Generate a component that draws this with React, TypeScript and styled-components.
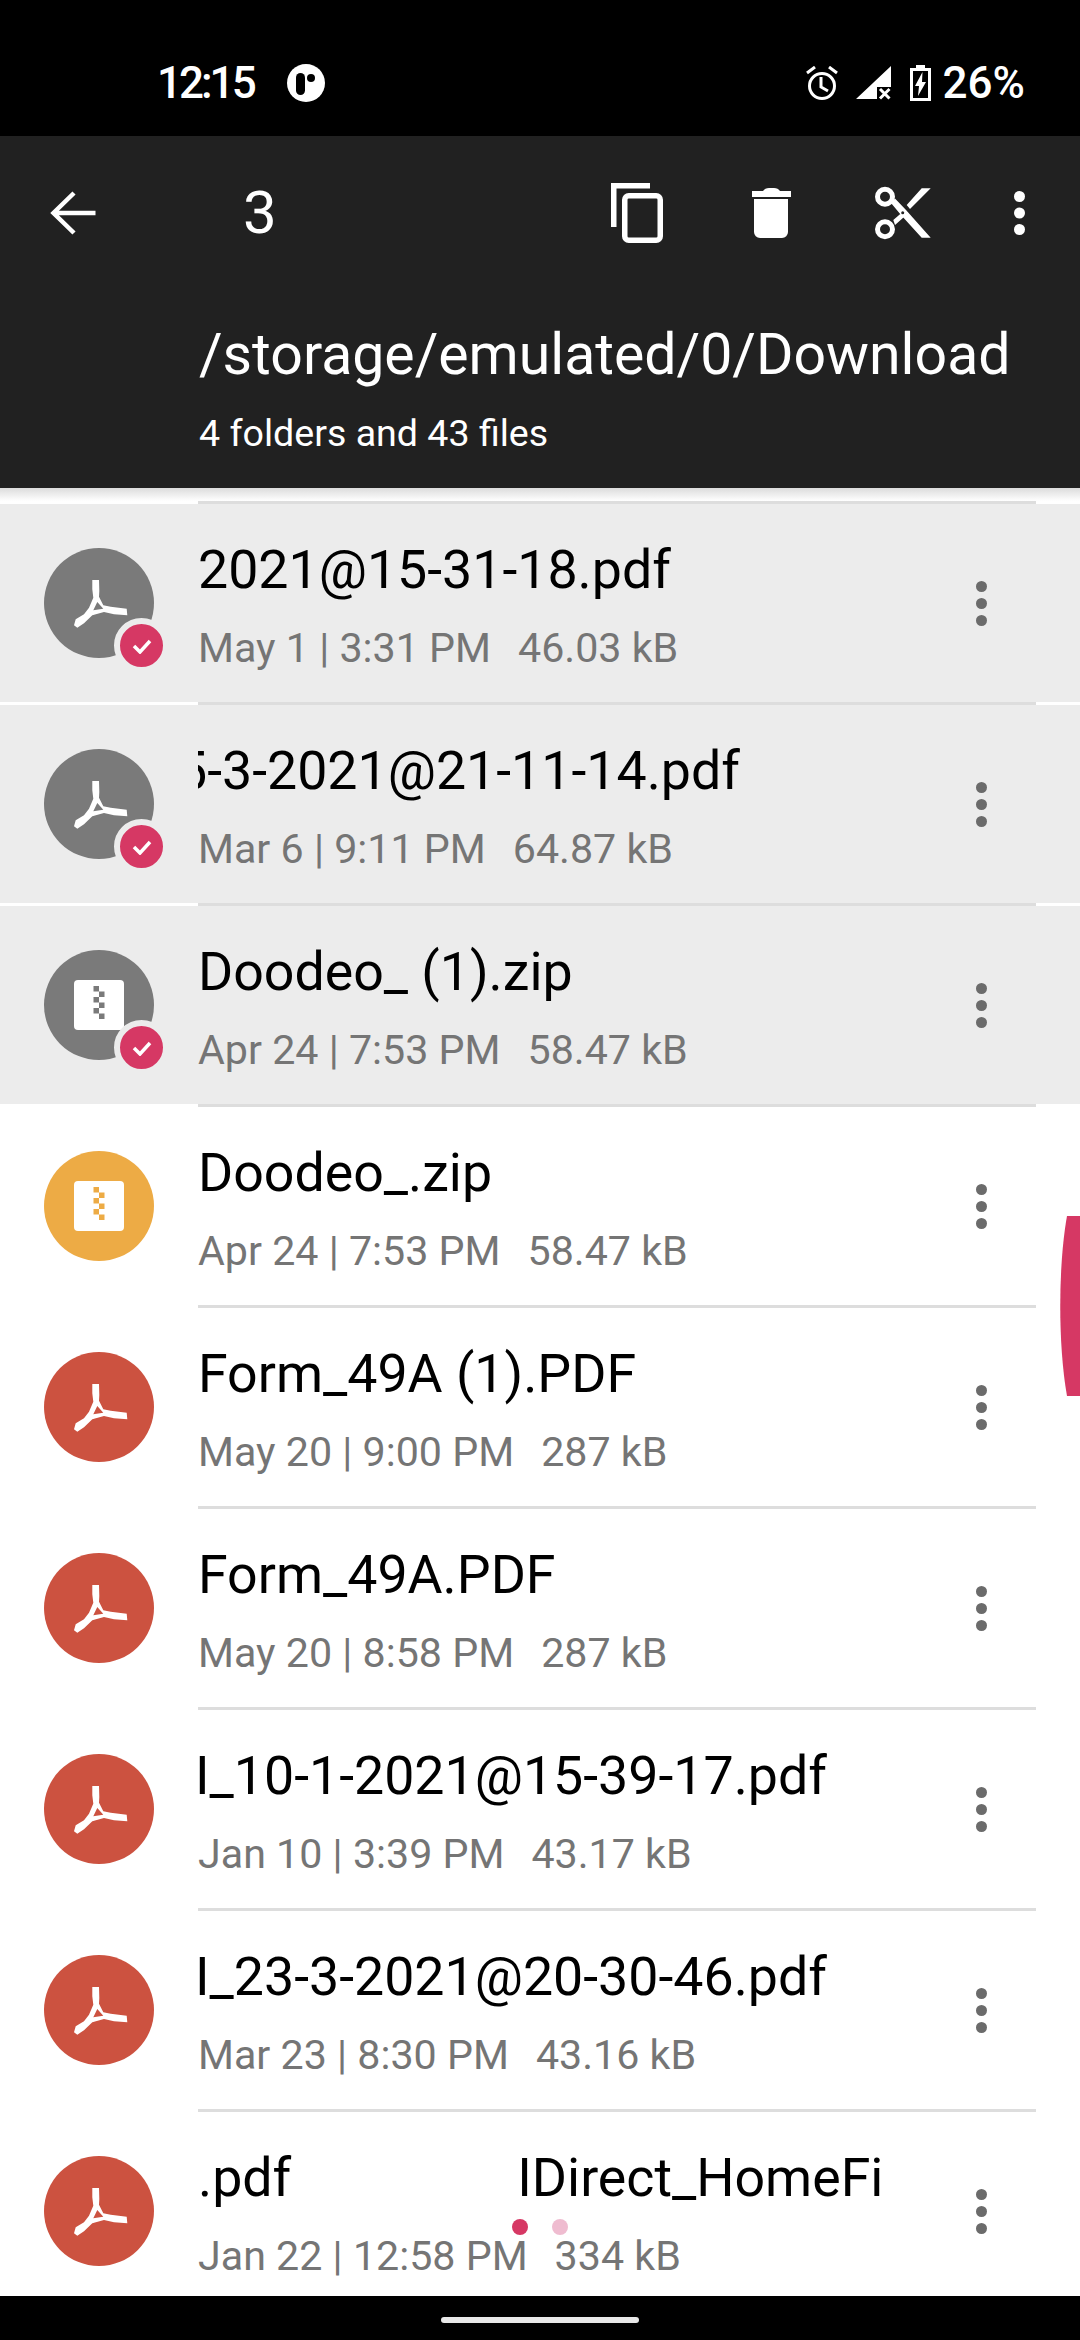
import React from "react";
import styled, { createGlobalStyle } from "styled-components";

type FileItem = {
  name: string;
  date: string;
  size: string;
  kind: "pdf" | "zip";
  selected?: boolean;
  shift?: number;
  trail?: string;
};

const files: FileItem[] = [
  { name: "2021@15-31-18.pdf", date: "May 1 | 3:31 PM", size: "46.03 kB", kind: "pdf", selected: true },
  { name: "5-3-2021@21-11-14.pdf", date: "Mar 6 | 9:11 PM", size: "64.87 kB", kind: "pdf", selected: true, shift: -21 },
  { name: "Doodeo_ (1).zip", date: "Apr 24 | 7:53 PM", size: "58.47 kB", kind: "zip", selected: true },
  { name: "Doodeo_.zip", date: "Apr 24 | 7:53 PM", size: "58.47 kB", kind: "zip" },
  { name: "Form_49A (1).PDF", date: "May 20 | 9:00 PM", size: "287 kB", kind: "pdf" },
  { name: "Form_49A.PDF", date: "May 20 | 8:58 PM", size: "287 kB", kind: "pdf" },
  { name: "I_10-1-2021@15-39-17.pdf", date: "Jan 10 | 3:39 PM", size: "43.17 kB", kind: "pdf", shift: -3 },
  { name: "I_23-3-2021@20-30-46.pdf", date: "Mar 23 | 8:30 PM", size: "43.16 kB", kind: "pdf", shift: -3 },
  { name: ".pdf", date: "Jan 22 | 12:58 PM", size: "334 kB", kind: "pdf", trail: "IDirect_HomeFi" },
];

const PdfGlyph = () => (
  <svg width="110" height="110" viewBox="0 0 110 110">
    <path
      fillRule="evenodd"
      fill="#fff"
      d="M48.3 32L55 32L55.3 43L55 48.7L59.3 57.3L66.7 58.7L82.7 60.7L83.3 67.3L70 66.3L60 64L48.3 67.3L40 75.3L33.3 79.7L30 77.3L31.7 71.3L40 66.3L45 59.7L49.3 49.7L48.3 41.3ZM53.3 54L49.3 62.3L59.3 60.7Z"
    />
  </svg>
);

const ZipGlyph = ({ color }: { color: string }) => (
  <svg width="110" height="110" viewBox="0 0 110 110">
    <rect x="30" y="30" width="50" height="50" rx="4" fill="#fff" />
    <g fill={color}>
      <rect x="49.5" y="36" width="5.5" height="5.5" />
      <rect x="55" y="41.5" width="5.5" height="5.5" />
      <rect x="49.5" y="47" width="5.5" height="5.5" />
      <rect x="55" y="52.5" width="5.5" height="5.5" />
      <rect x="49.5" y="58" width="5.5" height="5.5" />
      <rect x="55" y="63.5" width="5.5" height="5.5" />
    </g>
  </svg>
);

const Dots = ({ color, r, gap }: { color: string; r: number; gap: number }) => (
  <svg width={r * 2} height={r * 2 + gap * 2} viewBox={`0 0 ${r * 2} ${r * 2 + gap * 2}`}>
    <circle cx={r} cy={r} r={r} fill={color} />
    <circle cx={r} cy={r + gap} r={r} fill={color} />
    <circle cx={r} cy={r + gap * 2} r={r} fill={color} />
  </svg>
);

const App = () => {
  return (
    <Page>
      <GlobalStyle />
      <StatusBar>
        <StatusLeft>
          <StatusText $tight>12:15</StatusText>
          <svg width="38" height="38" viewBox="0 0 38 38">
            <circle cx="19" cy="19" r="19" fill="#fff" />
            <rect x="9" y="9" width="9" height="22" rx="4.5" fill="#000" />
            <circle cx="24" cy="14" r="4" fill="#000" />
          </svg>
        </StatusLeft>
        <StatusRight>
          <svg width="38" height="35" viewBox="0 0 38 35">
            <circle cx="16" cy="20" r="12.5" fill="none" stroke="#fff" strokeWidth="3" />
            <path d="M15 11v10l7 4M1 7l8-6M31 7l-8-6" fill="none" stroke="#fff" strokeWidth="3" />
          </svg>
          <svg width="42" height="34" viewBox="0 0 42 34">
            <path d="M0 33L35 0V21H21V33Z" fill="#fff" />
            <path d="M24 23l9.500 9.500M33.500 23l-9.500 9.500" stroke="#fff" strokeWidth="3" />
          </svg>
          <svg width="21" height="36" viewBox="0 0 21 36">
            <path d="M6 0h9v3h6v33H0V3h6z" fill="#fff" />
            <rect x="3" y="6" width="15" height="27" fill="#000" />
            <path d="M12.500 7L5 21h4l-1 10 8-14h-4z" fill="#fff" />
          </svg>
          <StatusText>26%</StatusText>
        </StatusRight>
      </StatusBar>
      <AppBar>
        <ActionRow>
          <svg width="46" height="44" viewBox="0 0 46 44">
            <path d="M24 2L3.500 22l20.500 20M3.500 22h42" fill="none" stroke="#fff" strokeWidth="4.500" />
          </svg>
          <Count>3</Count>
          <Actions>
            <svg width="58" height="60" viewBox="0 0 58 60">
              <path d="M39 2.750H2.750V44" fill="none" stroke="#fff" strokeWidth="5.500" />
              <rect x="13.750" y="12.750" width="35.500" height="44.500" rx="4" fill="none" stroke="#fff" strokeWidth="5.500" />
            </svg>
            <svg width="39" height="50" viewBox="0 0 39 50">
              <path d="M11 3Q13 0 17 0h5q4 0 6 3h11v6H0V3zM2 11h34v33a6 6 0 0 1-6 6H8a6 6 0 0 1-6-6z" fill="#fff" />
            </svg>
            <svg width="57" height="54" viewBox="-1 0 57 54">
              <g fill="none" stroke="#fff" strokeWidth="5">
                <circle cx="10" cy="10.700" r="7.500" />
                <circle cx="10" cy="43.300" r="7.500" />
              </g>
              <path
                fill="#fff"
                d="M16 17L20 12.500L31 24L55.700 51.700H46.700L26 29ZM31.700 19L46.700 2.300H55.700L35 23ZM18.300 34L26.700 26.700L29.300 30.700L20 39Z"
              />
              <circle cx="27.700" cy="26.700" r="1.500" fill="#212121" />
            </svg>
            <Dots color="#fff" r={5.5} gap={16.5} />
          </Actions>
        </ActionRow>
        <PathText>/storage/emulated/0/Download</PathText>
        <PathMeta>4 folders and 43 files</PathMeta>
      </AppBar>
      <List>
        <Shadow />
        {files.map((file, index) => (
          <React.Fragment key={index}>
            <Divider />
            <Row $selected={file.selected}>
              <Avatar $color={file.selected ? "#7a7a7a" : file.kind === "zip" ? "#edab45" : "#cc5240"}>
                {file.kind === "pdf" ? (
                  <PdfGlyph />
                ) : (
                  <ZipGlyph color={file.selected ? "#7a7a7a" : "#edab45"} />
                )}
                {file.selected && (
                  <Badge>
                    <svg width="20" height="16" viewBox="0 0 20 16">
                      <path d="M2 8l6 6L18 3" fill="none" stroke="#fff" strokeWidth="3.500" />
                    </svg>
                  </Badge>
                )}
              </Avatar>
              <Info>
                <TitleClip>
                  <Title $shift={file.shift || 0}>{file.name}</Title>
                  {file.trail && <Trail>{file.trail}</Trail>}
                </TitleClip>
                <Meta>
                  <span>{file.date}</span>
                  <span>{file.size}</span>
                </Meta>
              </Info>
              <Kebab>
                <Dots color="#6b6b6b" r={5.5} gap={17} />
              </Kebab>
            </Row>
          </React.Fragment>
        ))}
        <PagerDots>
          <PagerDot $color="#d63864" />
          <PagerDot $color="#efbcd0" />
        </PagerDots>
        <Fab>
          <svg width="20" height="180" viewBox="0 0 20 180">
            <path d="M7 0H20V180H7C-2 130 -2 50 7 0Z" fill="#d63864" />
          </svg>
        </Fab>
      </List>
      <NavBar>
        <Handle />
      </NavBar>
    </Page>
  );
};

export default App;

const GlobalStyle = createGlobalStyle`
  html, body {
    margin: 0;
    padding: 0;
    background: #000;
  }
  * {
    box-sizing: border-box;
  }
`;
const Page = styled.div`
  width: 1080px;
  height: 2340px;
  display: flex;
  flex-direction: column;
  overflow: hidden;
  font-family: Roboto, "Noto Sans", sans-serif;
  background-color: #ffffff;
`;
const StatusBar = styled.div`
  height: 136px;
  flex: none;
  background-color: #000000;
  display: flex;
  align-items: flex-start;
  justify-content: space-between;
  padding: 64px 55px 0 157px;
`;
const StatusLeft = styled.div`
  display: flex;
  align-items: center;
  gap: 33px;
`;
const StatusRight = styled.div`
  display: flex;
  align-items: center;
  gap: 12px;
`;
const StatusText = styled.span<{ $tight?: boolean }>`
  font-size: 44px;
  line-height: 38px;
  font-weight: 500;
  letter-spacing: ${(props) => (props.$tight ? "-3px" : "0")};
  color: #ffffff;
`;
const AppBar = styled.div`
  height: 352px;
  flex: none;
  background-color: #212121;
  padding: 47px 0 0 50px;
`;
const ActionRow = styled.div`
  display: flex;
  align-items: center;
  height: 60px;
`;
const Count = styled.span`
  margin-left: 147px;
  font-size: 60px;
  line-height: 60px;
  color: #ffffff;
`;
const Actions = styled.div`
  display: flex;
  align-items: center;
  margin-left: 334px;
  gap: 83px;
`;
const PathText = styled.div`
  margin: 79px 0 0 149px;
  font-size: 57.2px;
  line-height: 66px;
  color: #ffffff;
  white-space: nowrap;
`;
const PathMeta = styled.div`
  margin: 23px 0 0 149px;
  font-size: 37.6px;
  line-height: 44px;
  color: #ffffff;
`;
const List = styled.div`
  position: relative;
  flex: 1;
  min-height: 0;
  overflow: hidden;
  padding-top: 13px;
  background-color: #ffffff;
`;
const Shadow = styled.div`
  position: absolute;
  top: 0;
  left: 0;
  right: 0;
  height: 13px;
  background: linear-gradient(#dcdcdc, #ffffff);
`;
const Divider = styled.div`
  height: 3px;
  width: 838px;
  margin-left: 198px;
  background-color: #dddddd;
`;
const Row = styled.div<{ $selected?: boolean }>`
  height: 198px;
  display: flex;
  align-items: center;
  padding: 0 93px 0 44px;
  background-color: ${(props) => (props.$selected ? "#ececec" : "#ffffff")};
`;
const Avatar = styled.div<{ $color: string }>`
  position: relative;
  width: 110px;
  height: 110px;
  flex: none;
  border-radius: 50%;
  background-color: ${(props) => props.$color};
`;
const Badge = styled.div`
  position: absolute;
  left: 70px;
  top: 70px;
  width: 55px;
  height: 55px;
  display: flex;
  align-items: center;
  justify-content: center;
  border-radius: 50%;
  border: 6px solid #ececec;
  background-color: #d63864;
`;
const Info = styled.div`
  width: 688px;
  margin-left: 44px;
  padding-top: 6px;
`;
const TitleClip = styled.div`
  display: flex;
  overflow: hidden;
  height: 66px;
`;
const Title = styled.span<{ $shift: number }>`
  margin-left: ${(props) => props.$shift}px;
  flex: none;
  font-size: 53.7px;
  line-height: 60px;
  color: #000000;
  white-space: nowrap;
`;
const Trail = styled.span`
  margin-left: 226px;
  flex: none;
  font-size: 53.7px;
  line-height: 60px;
  color: #000000;
  white-space: nowrap;
`;
const Meta = styled.div`
  display: flex;
  gap: 27px;
  margin-top: 18px;
  font-size: 41.2px;
  line-height: 48px;
  color: #757575;
  white-space: nowrap;
`;
const Kebab = styled.div`
  margin-left: auto;
  display: flex;
`;
const PagerDots = styled.div`
  position: absolute;
  left: 512px;
  top: 1731px;
  display: flex;
  gap: 24px;
`;
const PagerDot = styled.div<{ $color: string }>`
  width: 16px;
  height: 16px;
  border-radius: 50%;
  background-color: ${(props) => props.$color};
`;
const Fab = styled.div`
  position: absolute;
  right: 0;
  top: 728px;
  width: 20px;
  height: 180px;
  display: flex;
`;
const NavBar = styled.div`
  height: 44px;
  flex: none;
  background-color: #000000;
  display: flex;
  justify-content: center;
  padding-top: 21px;
`;
const Handle = styled.div`
  width: 198px;
  height: 6px;
  border-radius: 3px;
  background-color: #e8e8e8;
`;
